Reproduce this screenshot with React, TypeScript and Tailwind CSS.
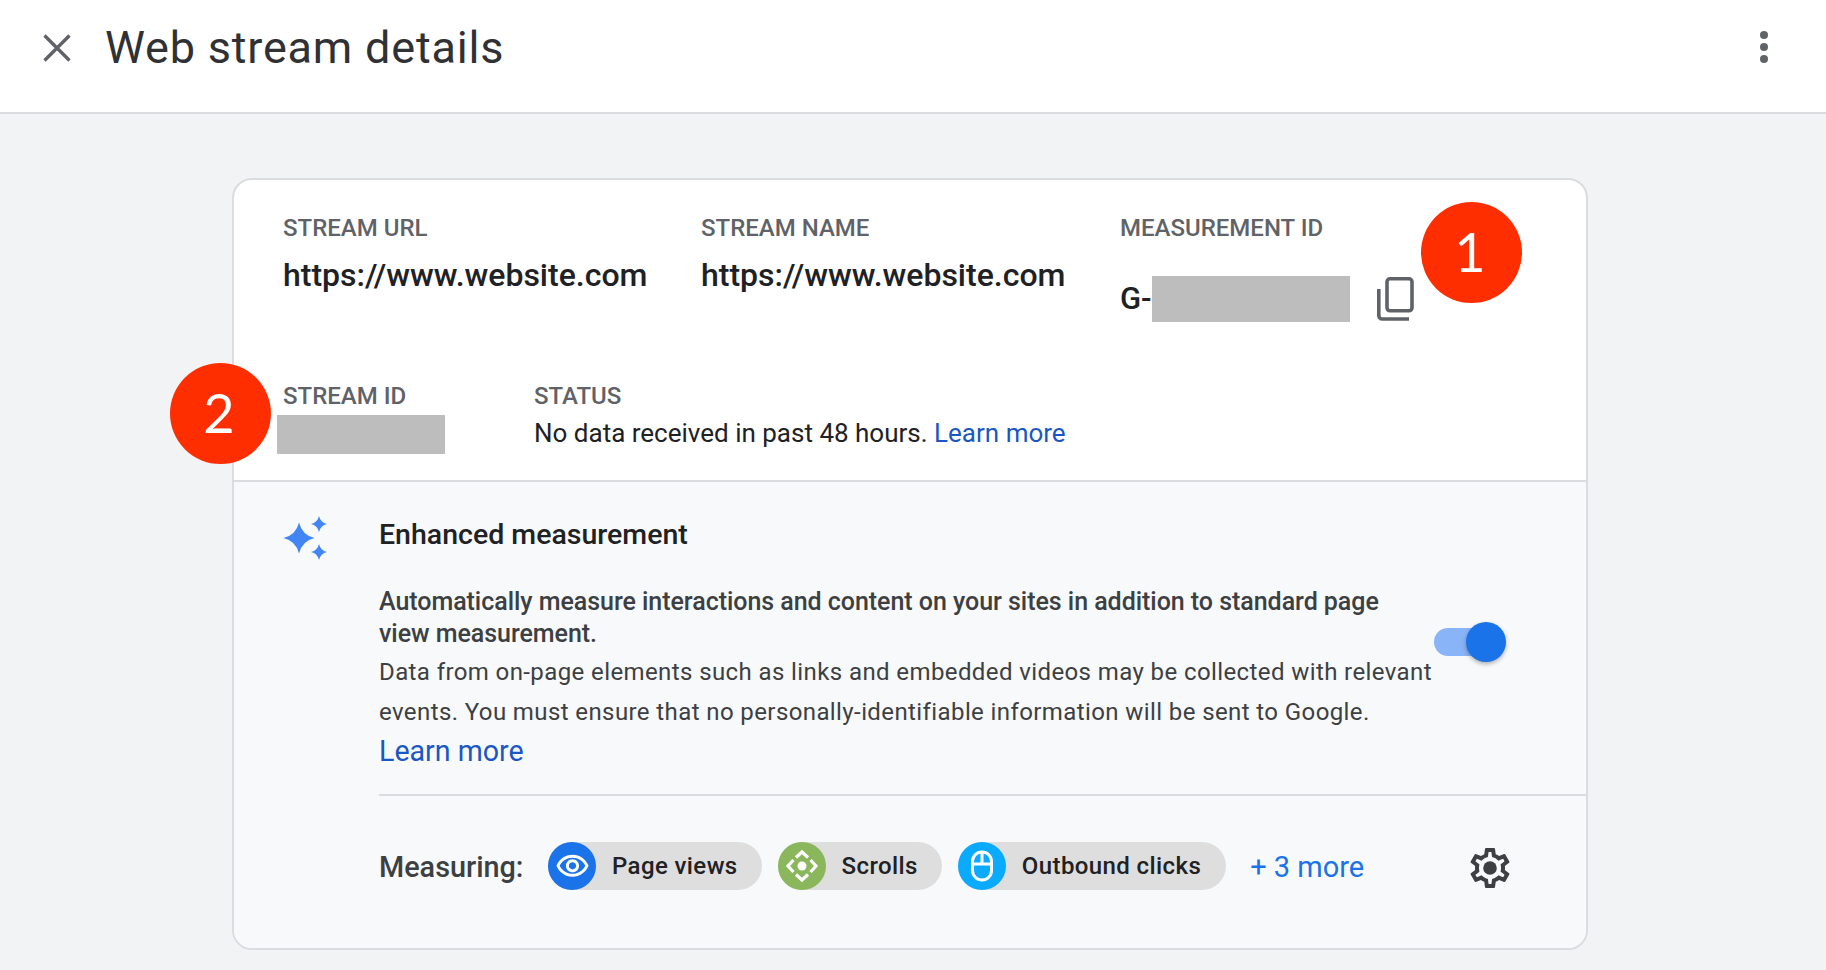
import type { ReactNode } from "react";

const font = { roboto: "font-['Roboto',sans-serif]" };

function Label({ children }: { children: ReactNode }) {
  return <div className="text-[24px] leading-[28px] font-medium text-[#5f6368]">{children}</div>;
}

function UrlValue() {
  return <div className="mt-[15px] text-[32px] leading-[36px] font-medium text-[#202124]">https://www.website.com</div>;
}

function Badge({ n, className }: { n: number; className: string }) {
  return (
    <div className={`absolute z-10 flex h-[101px] w-[101px] items-center justify-center rounded-full bg-[#ff2e00] pb-[3px] pr-[3px] font-['Lato',sans-serif] text-[54px] text-white ${className}`}>
      {n}
    </div>
  );
}

function CopyIcon() {
  return (
    <svg width="37" height="44" viewBox="0 0 37 44" fill="none" stroke="#5f6368" strokeWidth="3.6">
      <path d="M1.8 12V38.5a3.5 3.5 0 0 0 3.5 3.5H32" />
      <rect x="10" y="1.8" width="25" height="32" rx="3" />
    </svg>
  );
}

function SparkleIcon() {
  return (
    <svg width="44" height="44" viewBox="0 0 44 44" fill="#4285f4" className="shrink-0">
      <path d="M16 6.5Q19 19 31.5 22Q19 25 16 37.5Q13 25 .5 22Q13 19 16 6.5Z" />
      <path d="M36 0Q37.5 6.5 44 8Q37.5 9.5 36 16Q34.5 9.5 28 8Q34.5 6.5 36 0Z" />
      <path d="M36 28Q37.5 34.5 44 36Q37.5 37.5 36 44Q34.5 37.5 28 36Q34.5 34.5 36 28Z" />
    </svg>
  );
}

function GearIcon() {
  return (
    <svg width="40" height="40" viewBox="2 2 20 20" fill="#3c4043" fillRule="evenodd">
      <path d="M19.43 12.98c.04-.32.07-.64.07-.98 0-.34-.03-.66-.07-.98l2.11-1.65c.19-.15.24-.42.12-.64l-2-3.46c-.09-.16-.26-.25-.44-.25-.06 0-.12.01-.17.03l-2.49 1c-.52-.4-1.08-.73-1.69-.98l-.38-2.65C14.46 2.18 14.25 2 14 2h-4c-.25 0-.46.18-.49.42l-.38 2.65c-.61.25-1.17.59-1.69.98l-2.49-1c-.06-.02-.12-.03-.18-.03-.17 0-.34.09-.43.25l-2 3.46c-.13.22-.07.49.12.64l2.11 1.65c-.04.32-.07.65-.07.98 0 .33.03.66.07.98l-2.11 1.65c-.19.15-.24.42-.12.64l2 3.46c.09.16.26.25.44.25.06 0 .12-.01.17-.03l2.49-1c.52.4 1.08.73 1.69.98l.38 2.65c.03.24.24.42.49.42h4c.25 0 .46-.18.49-.42l.38-2.65c.61-.25 1.17-.59 1.69-.98l2.49 1c.06.02.12.03.18.03.17 0 .34-.09.43-.25l2-3.46c.12-.22.07-.49-.12-.64l-2.11-1.65zm-1.98-1.71c.04.31.05.52.05.73 0 .21-.02.43-.05.73l-.14 1.13.89.7 1.08.84-.7 1.21-1.27-.51-1.04-.42-.9.68c-.43.32-.84.56-1.25.73l-1.06.43-.16 1.13-.2 1.35h-1.4l-.19-1.35-.16-1.13-1.06-.43c-.43-.18-.83-.41-1.23-.71l-.91-.7-1.06.43-1.27.51-.7-1.21 1.08-.84.89-.7-.14-1.13c-.03-.31-.05-.54-.05-.74s.02-.43.05-.73l.14-1.13-.89-.7-1.08-.84.7-1.21 1.27.51 1.04.42.9-.68c.43-.32.84-.56 1.25-.73l1.06-.43.16-1.13.2-1.35h1.39l.19 1.35.16 1.13 1.06.43c.43.18.83.41 1.23.71l.91.7 1.06-.43 1.27-.51.7 1.21-1.07.85-.89.7.14 1.13z" />
      <circle cx="12" cy="12" r="3.4" />
    </svg>
  );
}

function EyeIcon() {
  return (
    <svg width="35" height="35" viewBox="0 0 24 24" fill="white">
      <path d="M12 6c3.79 0 7.17 2.13 8.82 5.5C19.17 14.87 15.79 17 12 17s-7.17-2.13-8.82-5.5C4.83 8.13 8.21 6 12 6m0-2C7 4 2.73 7.11 1 11.5 2.73 15.89 7 19 12 19s9.27-3.11 11-7.5C21.27 7.11 17 4 12 4zm0 5c1.38 0 2.5 1.12 2.5 2.5S13.38 14 12 14s-2.5-1.12-2.5-2.5S10.62 9 12 9m0-2c-2.48 0-4.5 2.02-4.5 4.5S9.52 16 12 16s4.5-2.02 4.5-4.5S14.48 7 12 7z" />
    </svg>
  );
}

function ScrollIcon() {
  return (
    <svg width="48" height="48" viewBox="0 0 48 48" fill="none" stroke="white" strokeWidth="3.2">
      <path d="M18 15.5 24 10l6 5.5" />
      <path d="M18 32.5 24 38l6-5.5" />
      <path d="M15.5 18 10 24l5.5 6" />
      <path d="M32.5 18 38 24l-5.5 6" />
      <circle cx="24" cy="24" r="4.5" fill="white" stroke="none" />
    </svg>
  );
}

function MouseIcon() {
  return (
    <svg width="48" height="48" viewBox="0 0 48 48" fill="none" stroke="white" strokeWidth="3">
      <rect x="14.5" y="10" width="19" height="28" rx="9.5" />
      <path d="M24 10v12M14.5 22h19" />
    </svg>
  );
}

function Chip({ color, icon, label, right }: { color: string; icon: ReactNode; label: string; right: string }) {
  return (
    <div className={`flex h-[48px] items-center rounded-full bg-[#dedede] ${right}`}>
      <div className={`flex h-[48px] w-[48px] items-center justify-center rounded-full ${color}`}>{icon}</div>
      <span className="ml-[16px] text-[24px] font-medium text-[#202124] tracking-[0.4px]">{label}</span>
    </div>
  );
}

export default function App() {
  return (
    <div className={`h-[970px] w-[1826px] overflow-hidden bg-[#f1f3f4] ${font.roboto}`}>
      <header className="flex h-[114px] items-center border-b-2 border-[#dadce0] bg-white pb-[18px]">
        <svg width="28" height="28" viewBox="0 0 28 28" stroke="#5f6368" strokeWidth="3.4" className="ml-[43px] mt-[2px]">
          <path d="M1.5 1.5 26.5 26.5M26.5 1.5 1.5 26.5" />
        </svg>
        <h1 className="ml-[34px] mt-[2px] text-[45px] font-normal leading-[48px] tracking-[0.8px] text-[#303134]">Web stream details</h1>
        <div className="ml-auto mr-[58px] flex flex-col gap-[4px]">
          <span className="h-[8px] w-[8px] rounded-full bg-[#5f6368]" />
          <span className="h-[8px] w-[8px] rounded-full bg-[#5f6368]" />
          <span className="h-[8px] w-[8px] rounded-full bg-[#5f6368]" />
        </div>
      </header>

      <div className="pl-[232px] pt-[64px]">
        <div className="relative w-[1356px] rounded-[20px] border-2 border-[#dadce0] bg-white">
          <Badge n={1} className="left-[1187px] top-[22px]" />
          <Badge n={2} className="left-[-64px] top-[183px]" />

          <section className="pl-[49px] pt-[34px] pb-[26px]">
            <div className="flex">
              <div className="w-[418px]">
                <Label>STREAM URL</Label>
                <UrlValue />
              </div>
              <div className="w-[419px]">
                <Label>STREAM NAME</Label>
                <UrlValue />
              </div>
              <div>
                <Label>MEASUREMENT ID</Label>
                <div className="mt-[34px] flex h-[46px] items-center">
                  <span className="w-[32px] text-[31px] font-medium text-[#202124]">G-</span>
                  <div className="h-[46px] w-[198px] bg-[#bdbdbd]" />
                  <div className="ml-[27px]"><CopyIcon /></div>
                </div>
              </div>
            </div>
            <div className="mt-[60px] flex">
              <div className="w-[251px]">
                <Label>STREAM ID</Label>
                <div className="ml-[-6px] mt-[5px] h-[39px] w-[168px] bg-[#bdbdbd]" />
              </div>
              <div>
                <Label>STATUS</Label>
                <div className="mt-[5px] text-[26px] leading-[36px] text-[#202124]">
                  No data received in past 48 hours. <span className="text-[#1a57c5]">Learn more</span>
                </div>
              </div>
            </div>
          </section>

          <section className="rounded-b-[18px] border-t-2 border-[#dadce0] bg-[#f8f9fa] pt-[34px] pb-[58px]">
            <div className="flex pl-[49px]">
              <SparkleIcon />
              <div className="ml-[52px] flex-1">
                <div className="flex">
                  <div className="w-[1054px]">
                    <h2 className="mt-[1px] text-[28.5px] font-medium leading-[36px] text-[#202124]">Enhanced measurement</h2>
                    <p className="mt-[33px] max-w-[1020px] text-[25px] font-medium leading-[32px] tracking-[-0.04px] text-[#3c4043]">
                      Automatically measure interactions and content on your sites in addition to standard page view measurement.
                    </p>
                    <p className="mt-[2px] text-[24px] leading-[40px] text-[#3c4043] tracking-[0.4px]">
                      Data from on-page elements such as links and embedded videos may be collected with relevant events. You must ensure that no personally-identifiable information will be sent to Google.
                    </p>
                    <a className="mt-[1px] block text-[28.6px] leading-[36px] text-[#1a57c5]">Learn more</a>
                  </div>
                  <div className="relative ml-[1px] mt-[112px] h-[28px] w-[52px] self-start rounded-full bg-[#8ab4f8]">
                    <div className="absolute left-[32px] top-[-6px] h-[40px] w-[40px] rounded-full bg-[#1a73e8] shadow-[0_2px_4px_rgba(0,0,0,0.3)]" />
                  </div>
                </div>
                <div className="mt-[25px] border-t-2 border-[#dadce0]" />
                <div className="mt-[46px] flex items-center">
                  <span className="mt-[4px] w-[169px] text-[28.8px] font-medium text-[#3c4043]">Measuring:</span>
                  <div className="flex gap-[16px]">
                    <Chip color="bg-[#1a73e8]" icon={<EyeIcon />} label="Page views" right="pr-[24px]" />
                    <Chip color="bg-[#8ab75c]" icon={<ScrollIcon />} label="Scrolls" right="pr-[24px]" />
                    <Chip color="bg-[#0aabff]" icon={<MouseIcon />} label="Outbound clicks" right="pr-[25px]" />
                  </div>
                  <span className="ml-[24px] mt-[3px] w-[220px] text-[29px] text-[#1a73e8]">+ 3 more</span>
                  <div className="mt-[4px]"><GearIcon /></div>
                </div>
              </div>
            </div>
          </section>
        </div>
      </div>
    </div>
  );
}
